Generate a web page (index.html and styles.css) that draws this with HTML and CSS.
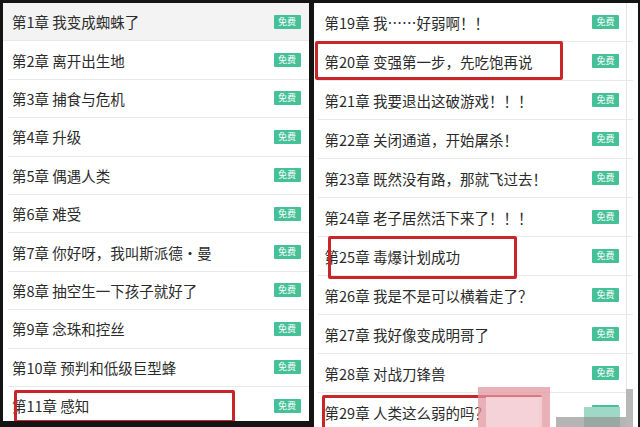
FILE: index.html
```html
<!DOCTYPE html>
<html lang="zh-CN">
<head>
  <meta charset="UTF-8">
  <title>章节目录</title>
  <link rel="stylesheet" href="styles.css">
</head>
<body>
  <div class="screens">
    <ul class="panel panel-left">
      <li class="row row-active"><span class="title">第1章 我变成蜘蛛了</span><span class="free">免费</span></li>
      <li class="row"><span class="title">第2章 离开出生地</span><span class="free">免费</span></li>
      <li class="row"><span class="title">第3章 捕食与危机</span><span class="free">免费</span></li>
      <li class="row"><span class="title">第4章 升级</span><span class="free">免费</span></li>
      <li class="row"><span class="title">第5章 偶遇人类</span><span class="free">免费</span></li>
      <li class="row"><span class="title">第6章 难受</span><span class="free">免费</span></li>
      <li class="row"><span class="title">第7章 你好呀，我叫斯派德·曼</span><span class="free">免费</span></li>
      <li class="row"><span class="title">第8章 抽空生一下孩子就好了</span><span class="free">免费</span></li>
      <li class="row"><span class="title">第9章 念珠和控丝</span><span class="free">免费</span></li>
      <li class="row"><span class="title">第10章 预判和低级巨型蜂</span><span class="free">免费</span></li>
      <li class="row"><span class="title">第11章 感知</span><span class="free">免费</span><span class="mark mark-11"></span></li>
    </ul>
    <ul class="panel panel-right">
      <li class="row"><span class="title">第19章 我……好弱啊！！</span><span class="free">免费</span></li>
      <li class="row"><span class="title">第20章 变强第一步，先吃饱再说</span><span class="free">免费</span><span class="mark mark-20"></span></li>
      <li class="row"><span class="title">第21章 我要退出这破游戏！！！</span><span class="free">免费</span></li>
      <li class="row"><span class="title">第22章 关闭通道，开始屠杀！</span><span class="free">免费</span></li>
      <li class="row"><span class="title">第23章 既然没有路，那就飞过去！</span><span class="free">免费</span></li>
      <li class="row"><span class="title">第24章 老子居然活下来了！！！</span><span class="free">免费</span></li>
      <li class="row"><span class="title">第25章 毒爆计划成功</span><span class="free">免费</span><span class="mark mark-25"></span></li>
      <li class="row"><span class="title">第26章 我是不是可以横着走了？</span><span class="free">免费</span></li>
      <li class="row"><span class="title">第27章 我好像变成明哥了</span><span class="free">免费</span></li>
      <li class="row"><span class="title">第28章 对战刀锋兽</span><span class="free">免费</span></li>
      <li class="row"><span class="title">第29章 人类这么弱的吗？</span><span class="free">免费</span><span class="mark mark-29"></span></li>
      <!-- pixelated watermark left by the screenshot -->
      <li class="blur blur-pink"></li>
      <li class="blur blur-pink-in"></li>
      <li class="blur blur-teal"></li>
      <li class="blur blur-grey"></li>
      <li class="blur blur-grey-side"></li>
    </ul>
  </div>
</body>
</html>
```

FILE: styles.css
```css
body {
  margin: 0;
  background: #141414;
  font-family: "Noto Sans CJK SC", "Noto Sans", sans-serif;
  width: 640px;
  height: 427px;
  overflow: hidden;
}
.screens {
  display: flex;
  gap: 5px;
  padding: 3px 2px 0 3px;
  height: 424px;
}
.panel {
  list-style: none;
  margin: 0;
  padding: 0;
  background: #fff;
  overflow: hidden;
  position: relative;
}
.panel-left {
  width: 308px;
  height: 418px;
}
.panel-right {
  width: 322px;
  height: 424px;
  border-right: 5px solid #fff;
  box-shadow: inset -6px 0 0 #fff, inset -7px 0 0 #e6e6e6;
}
.row {
  position: relative;
  display: flex;
  align-items: center;
  justify-content: space-between;
  box-sizing: border-box;
  margin-left: 5px;
  border-bottom: 1px solid #e9e9e9;
  color: #2b2b2b;
  font-size: 14.5px;
  white-space: nowrap;
}
.panel-left .row {
  height: 38.4px;
  padding: 0 8px 0 4px;
}
.panel-right .row {
  height: 39px;
  margin-left: 4px;
  padding: 0 14px 0 7px;
}
.row-active {
  background: #f3f3f3;
  margin-left: 0;
  padding-left: 9px !important;
}
.free {
  display: inline-block;
  width: 27px;
  height: 14px;
  line-height: 14px;
  text-align: center;
  background: #45c097;
  color: #fff;
  font-size: 9px;
  border-radius: 1px;
}
.mark {
  position: absolute;
  border: 3px solid #c8262a;
  border-radius: 2px;
  box-sizing: border-box;
}
.mark-11 {
  left: 6px;
  top: 3px;
  width: 221px;
  height: 33px;
}
.mark-20 {
  left: -3px;
  top: -1px;
  width: 248px;
  height: 39px;
}
.mark-25 {
  left: 10px;
  top: -1px;
  width: 189px;
  height: 43px;
}
.mark-29 {
  left: 4px;
  top: 2px;
  width: 220px;
  height: 44px;
}
.blur {
  position: absolute;
  list-style: none;
}
.blur-pink {
  left: 164px;
  top: 384px;
  width: 72px;
  height: 40px;
  background: rgba(226, 150, 160, 0.75);
}
.blur-pink-in {
  left: 172px;
  top: 394px;
  width: 56px;
  height: 30px;
  background: rgba(246, 214, 218, 0.9);
}
.blur-teal {
  left: 270px;
  top: 404px;
  width: 36px;
  height: 20px;
  background: #9fd8c6;
}
.blur-grey {
  left: 242px;
  top: 414px;
  width: 80px;
  height: 10px;
  background: rgba(150, 150, 150, 0.7);
}
.blur-grey-side {
  left: 312px;
  top: 386px;
  width: 10px;
  height: 38px;
  background: #b8b8b8;
}
```
